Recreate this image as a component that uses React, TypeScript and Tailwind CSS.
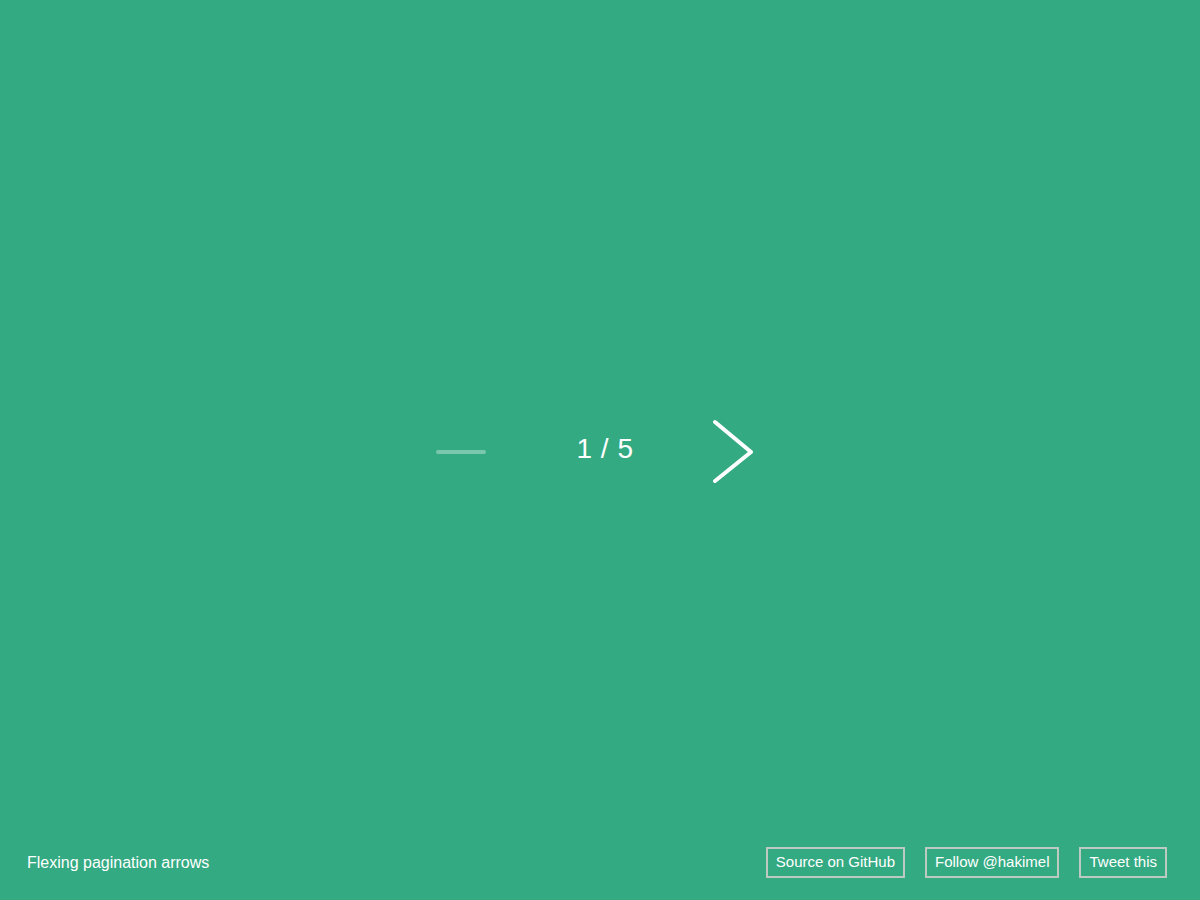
import React, { useState } from 'react';

const App: React.FC = () => {
    const [page, setPage] = useState(1);
    const total = 5;

    return (
        <div className="w-[1200px] h-[900px] bg-[#33aa82] flex flex-col text-white font-['Liberation_Sans',Arial,sans-serif]">
            {/* Pagination */}
            <div className="flex-1 flex items-center justify-center pt-[57px]">
                <div className="flex items-center pr-[16px]">
                    <button
                        onClick={() => setPage(Math.max(1, page - 1))}
                        className="w-[60px] h-[70px] flex items-center justify-center"
                    >
                        <div className="w-[50px] h-[4px] rounded-full bg-white/35" />
                    </button>
                    <div className="w-[228px] mb-[7px] text-center text-[28px] leading-none tracking-[0.5px]">
                        {page} / {total}
                    </div>
                    <button
                        onClick={() => setPage(Math.min(total, page + 1))}
                        className="w-[42px] h-[70px] -ml-[8px] flex items-center"
                    >
                        <svg width="42" height="70" viewBox="0 0 42 70" fill="none">
                            <path d="M4 5 L40 35 L4 64" stroke="white" strokeWidth="4" strokeLinecap="round" strokeLinejoin="round" />
                        </svg>
                    </button>
                </div>
            </div>

            {/* Footer */}
            <div className="flex items-center justify-between pl-[27px] pr-[33px] pb-[22px]">
                <span className="text-[16px]">Flexing pagination arrows</span>
                <div className="flex gap-[20px]">
                    {['Source on GitHub', 'Follow @hakimel', 'Tweet this'].map((label) => (
                        <a
                            key={label}
                            className="h-[31px] px-[8px] flex items-center border-2 border-[#bccac2] text-[15px]"
                        >
                            {label}
                        </a>
                    ))}
                </div>
            </div>
        </div>
    );
};

export default App;
